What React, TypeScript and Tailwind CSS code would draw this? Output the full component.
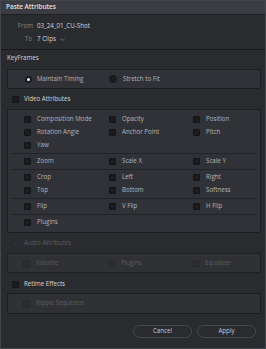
import React from "react";

const font = { fontFamily: '"Open Sans", "Liberation Sans", sans-serif' };

function Box({ disabled = false }: { disabled?: boolean }) {
  return (
    <div
      className={
        disabled
          ? "w-[7px] h-[7px] shrink-0 rounded-[1px] bg-[#2c2d31] border border-[#26272a]"
          : "w-[7px] h-[7px] shrink-0 rounded-[1px] bg-[#1b1c1f] border border-[#141517]"
      }
    />
  );
}

function Item({ label, w, disabled = false }: { label?: string; w?: string; disabled?: boolean }) {
  if (!label) return <div className={w} />;
  return (
    <div className={`flex items-center gap-[6px] ${w ?? ""}`}>
      <Box disabled={disabled} />
      <span className={disabled ? "text-[#5b5c61]" : "text-[#b4b5b8]"}>{label}</span>
    </div>
  );
}

function Row({ items, disabled = false }: { items: (string | undefined)[]; disabled?: boolean }) {
  return (
    <div className="flex items-center h-[13px] pl-[16px]">
      <Item label={items[0]} w="w-[85px]" disabled={disabled} />
      <Item label={items[1]} w="w-[84px]" disabled={disabled} />
      <Item label={items[2]} disabled={disabled} />
    </div>
  );
}

function Divider() {
  return <div className="h-px bg-[#222326] my-[1px] ml-[3px] mr-[4px]" />;
}

export default function App() {
  return (
    <div
      style={font}
      className="w-[266px] h-[349px] bg-[#2a2b2f] border border-[#45464b] flex flex-col text-[6.2px] leading-none text-[#b4b5b8] overflow-hidden"
    >
      <div className="h-[14px] bg-[#3b3c41] border-b border-[#1e1f22] flex items-center pl-[5px] shrink-0">
        <span className="text-[6.4px] font-semibold text-[#e2e2e4]">Paste Attributes</span>
      </div>

      <div className="pt-[5px] pb-[3px] border-b border-[#18191b] shrink-0">
        <div className="flex items-center h-[13px]">
          <span className="w-[32px] text-right text-[#86878b]">From</span>
          <span className="ml-[4px] text-[#d4d4d6]">03_24_01_CU-Shot</span>
        </div>
        <div className="flex items-center h-[13px]">
          <span className="w-[31px] text-right text-[#86878b]">To</span>
          <span className="ml-[5px] text-[#d4d4d6]">7 Clips</span>
          <svg className="ml-[4px]" width="5" height="3" viewBox="0 0 5 3">
            <path d="M0.4 0.5 L2.5 2.5 L4.6 0.5" fill="none" stroke="#8a8b8f" strokeWidth="0.7" />
          </svg>
        </div>
      </div>

      <div className="mt-[2px] h-[12px] flex items-center pl-[6px] text-[#d6d6d8] shrink-0">KeyFrames</div>

      <div className="mt-[5px] ml-[6px] mr-[4px] h-[20px] bg-[#313237] border border-[#1c1d20] rounded-[2px] flex items-center pl-[17px] shrink-0">
        <div className="flex items-center gap-[5px] w-[84px]">
          <div className="w-[7px] h-[7px] rounded-full bg-[#1a1b1e] flex items-center justify-center">
            <div className="w-[3px] h-[3px] rounded-full bg-[#f2f2f2]" />
          </div>
          <span>Maintain Timing</span>
        </div>
        <div className="flex items-center gap-[6px]">
          <div className="w-[8px] h-[8px] rounded-full bg-[#1a1b1e]" />
          <span>Stretch to Fit</span>
        </div>
      </div>

      <div className="mt-[4px] h-[12px] flex items-center gap-[5px] pl-[11px] text-[#d6d6d8] shrink-0">
        <Box />
        <span>Video Attributes</span>
      </div>

      <div className="mt-[4px] ml-[6px] mr-[4px] bg-[#313237] border border-[#1c1d20] rounded-[2px] pt-[3px] pb-[3px] shrink-0">
        <Row items={["Composition Mode", "Opacity", "Position"]} />
        <Row items={["Rotation Angle", "Anchor Point", "Pitch"]} />
        <Row items={["Yaw"]} />
        <Divider />
        <Row items={["Zoom", "Scale X", "Scale Y"]} />
        <Divider />
        <Row items={["Crop", "Left", "Right"]} />
        <Row items={["Top", "Bottom", "Softness"]} />
        <Divider />
        <Row items={["Flip", "V Flip", "H Flip"]} />
        <Divider />
        <Row items={["Plugins"]} />
      </div>

      <div className="mt-[4px] h-[12px] flex items-center gap-[5px] pl-[11px] text-[#5b5c61] shrink-0">
        <Box disabled />
        <span>Audio Attributes</span>
      </div>

      <div className="mt-[4px] ml-[6px] mr-[4px] h-[20px] bg-[#303135] border border-[#1f2023] rounded-[2px] flex items-center shrink-0">
        <div className="w-full -ml-px">
          <Row items={["Volume", "Plugins", "Equalizer"]} disabled />
        </div>
      </div>

      <div className="mt-[5px] h-[12px] flex items-center gap-[5px] pl-[11px] text-[#d6d6d8] shrink-0">
        <Box />
        <span>Retime Effects</span>
      </div>

      <div className="mt-[3px] ml-[6px] mr-[4px] h-[21px] bg-[#303135] border border-[#1c1d20] rounded-[2px] flex items-center shrink-0">
        <div className="w-full -ml-px">
          <Row items={["Ripple Sequence"]} disabled />
        </div>
      </div>

      <div className="mt-[11px] flex justify-end gap-[5px] pr-[9px] shrink-0">
        <button className="w-[59px] h-[13px] rounded-full border border-[#46474c] bg-[#2a2b2f] text-[#c9c9cc] text-[6.2px] leading-none flex items-center justify-center">
          Cancel
        </button>
        <button className="w-[59px] h-[13px] rounded-full border border-[#46474c] bg-[#2a2b2f] text-[#c9c9cc] text-[6.2px] leading-none flex items-center justify-center">
          Apply
        </button>
      </div>
    </div>
  );
}
